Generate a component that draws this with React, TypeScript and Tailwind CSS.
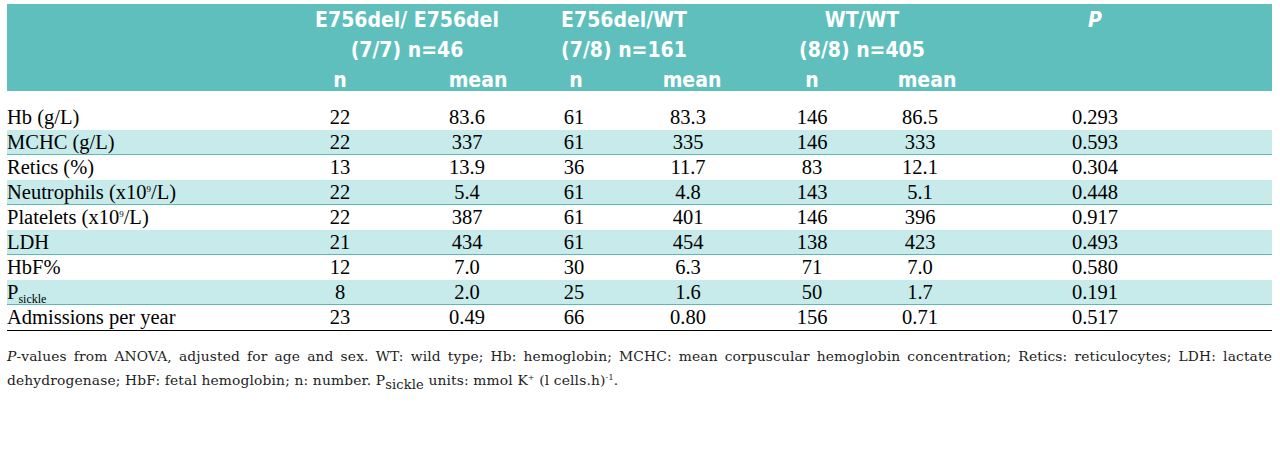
import React from "react";

const sup9 = <sup className="relative -top-[7px] align-baseline text-[9px]">9</sup>;

const rows: { label: React.ReactNode; v: string[]; shade: boolean }[] = [
  { label: "Hb (g/L)", v: ["22", "83.6", "61", "83.3", "146", "86.5", "0.293"], shade: false },
  { label: "MCHC (g/L)", v: ["22", "337", "61", "335", "146", "333", "0.593"], shade: true },
  { label: "Retics (%)", v: ["13", "13.9", "36", "11.7", "83", "12.1", "0.304"], shade: false },
  {
    label: <>Neutrophils (x10{sup9}/L)</>,
    v: ["22", "5.4", "61", "4.8", "143", "5.1", "0.448"],
    shade: true,
  },
  {
    label: <>Platelets (x10{sup9}/L)</>,
    v: ["22", "387", "61", "401", "146", "396", "0.917"],
    shade: false,
  },
  { label: "LDH", v: ["21", "434", "61", "454", "138", "423", "0.493"], shade: true },
  { label: "HbF%", v: ["12", "7.0", "30", "6.3", "71", "7.0", "0.580"], shade: false },
  {
    label: (
      <>
        P<sub className="relative top-[4px] align-baseline text-[12px]">sickle</sub>
      </>
    ),
    v: ["8", "2.0", "25", "1.6", "50", "1.7", "0.191"],
    shade: true,
  },
  { label: "Admissions per year", v: ["23", "0.49", "66", "0.80", "156", "0.71", "0.517"], shade: false },
];

const grid = "grid grid-cols-[273px_120px_134px_80px_148px_100px_116px_234px_60px]";
const head =
  "font-['Liberation_Sans_Narrow','DejaVu_Sans_Condensed',sans-serif] font-bold text-white text-[21px] leading-[30px]";

export default function App() {
  return (
    <div className="w-[1280px] h-[474px] bg-white pt-[4px] pl-[7px] font-['Liberation_Serif',serif] text-black">
      <div className="w-[1265px]">
        {/* Header */}
        <div className={`bg-[#5fbfbd] h-[87px] pt-[1px] ${head}`}>
          <div className={grid}>
            <div />
            <div className="col-span-2 text-center">E756del/ E756del</div>
            <div className="col-span-2 text-center pr-[48px]">E756del/WT</div>
            <div className="col-span-2 text-center pr-[16px]">WT/WT</div>
            <div className="text-center italic">P</div>
            <div />
          </div>
          <div className={grid}>
            <div />
            <div className="col-span-2 text-center">(7/7) n=46</div>
            <div className="col-span-2 text-center pr-[48px]">(7/8) n=161</div>
            <div className="col-span-2 text-center pr-[16px]">(8/8) n=405</div>
            <div />
            <div />
          </div>
          <div className={grid}>
            <div />
            <div className="text-center">n</div>
            <div className="text-center pl-[22px]">mean</div>
            <div className="text-center pl-[4px]">n</div>
            <div className="text-center pl-[8px]">mean</div>
            <div className="text-center">n</div>
            <div className="text-center pl-[14px]">mean</div>
            <div />
            <div />
          </div>
        </div>

        {/* Body */}
        <div className="mt-[14px] border-b border-black">
          {rows.map((r, i) => (
            <div
              key={i}
              className={`${grid} h-[25px] items-center text-[20.5px] leading-[25px] ${
                r.shade ? "bg-[#c7ebea] border-b border-[#5db8b6]" : ""
              }`}
            >
              <div className="whitespace-nowrap">{r.label}</div>
              {r.v.map((x, j) => (
                <div key={j} className="text-center">
                  {x}
                </div>
              ))}
              <div />
            </div>
          ))}
        </div>

        {/* Footnote */}
        <div className="mt-[13px] font-['DejaVu_Serif',serif] text-[13.8px] tracking-[0.15px] leading-[24px] text-[#222] text-justify [text-align-last:left]">
          <i>P</i>-values from ANOVA, adjusted for age and sex. WT: wild type; Hb: hemoglobin; MCHC: mean
          corpuscular hemoglobin concentration; Retics: reticulocytes; LDH: lactate dehydrogenase; HbF: fetal
          hemoglobin; n: number. P<sub className="relative top-[4px] align-baseline text-[13px]">sickle</sub> units:
          mmol K<sup className="relative -top-[5px] align-baseline text-[8px]">+</sup> (l cells.h)
          <sup className="relative -top-[5px] align-baseline text-[8px]">-1</sup>.
        </div>
      </div>
    </div>
  );
}
